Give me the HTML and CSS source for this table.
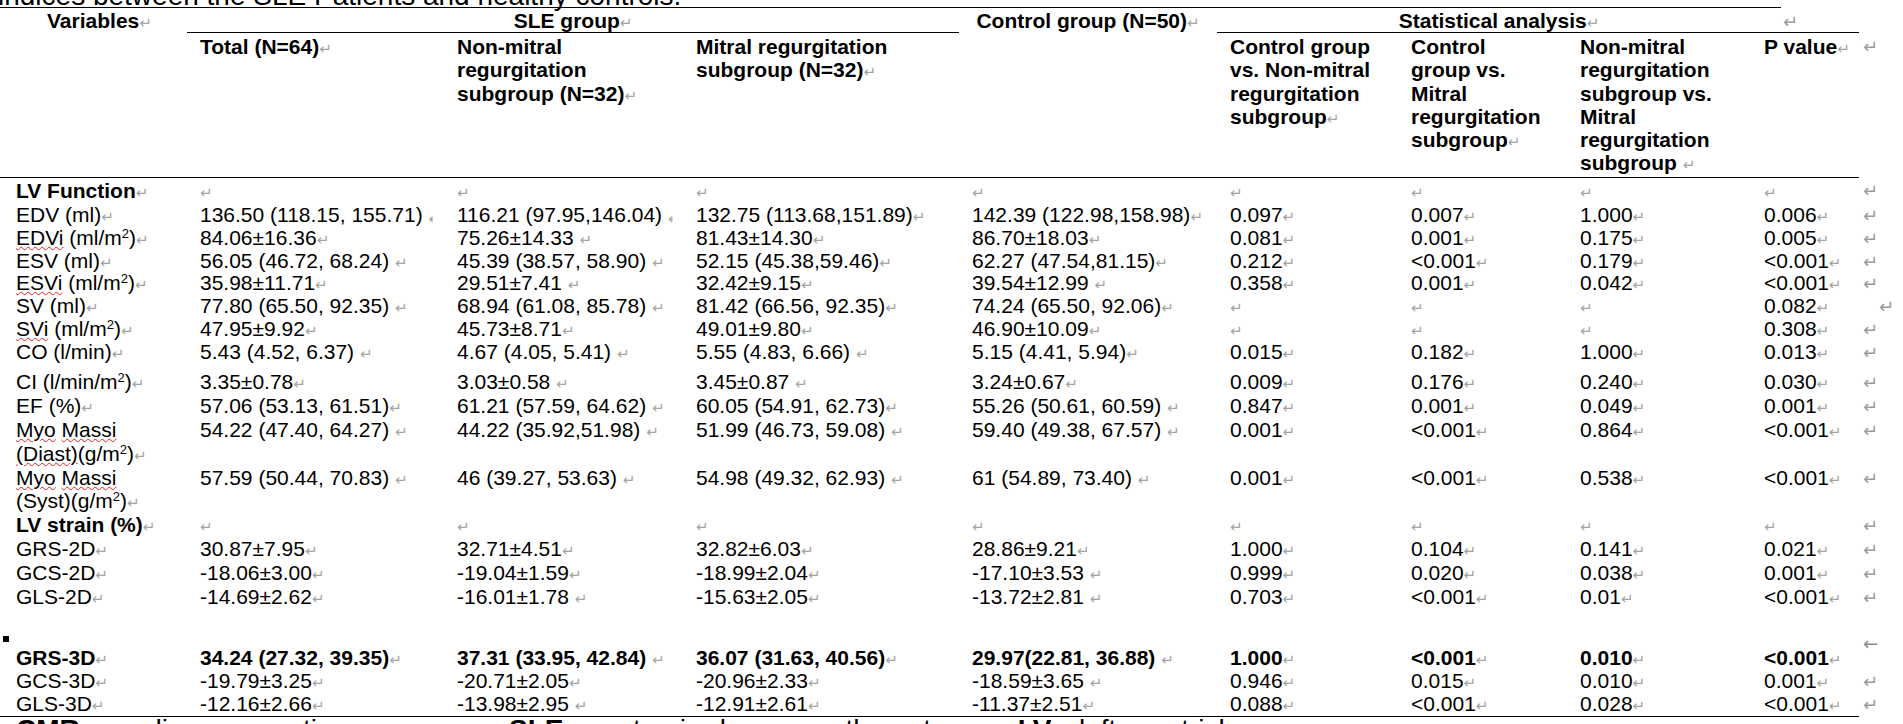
FILE: index.html
```html
<!DOCTYPE html>
<html>
<head>
<meta charset="utf-8">
<link rel="stylesheet" href="styles.css">
</head>
<body>
<p class="caption">indices between the SLE Patients and healthy controls.</p>
<table class="grid">
<colgroup>
<col class="w1"><col class="w2"><col class="w3"><col class="w4"><col class="w5"><col class="w6"><col class="w7"><col class="w8"><col class="w9a"><col class="w9b"><col class="wm">
</colgroup>
<tr class="h1">
<td class="bt hv" rowspan="2"><b>Variables</b><span class="m">↵</span></td>
<td class="bt hc" colspan="3"><b>SLE group</b><span class="m">↵</span></td>
<td class="bt hc" rowspan="2"><b>Control group (N=50)</b><span class="m">↵</span></td>
<td class="bt hc" colspan="4"><b>Statistical analysis</b><span class="m">↵</span></td>
<td class="h1end"><span class="rm">↵</span></td>
<td></td>
</tr>
<tr class="h2">
<td class="bt"><b>Total (N=64)</b><span class="m">↵</span></td>
<td class="bt"><b>Non-mitral<br>regurgitation<br>subgroup (N=32)</b><span class="m">↵</span></td>
<td class="bt"><b>Mitral regurgitation<br>subgroup (N=32)</b><span class="m">↵</span></td>
<td class="bt"><b>Control group<br>vs. Non-mitral<br>regurgitation<br>subgroup</b><span class="m">↵</span></td>
<td class="bt"><b>Control<br>group vs.<br>Mitral<br>regurgitation<br>subgroup</b><span class="m">↵</span></td>
<td class="bt"><b>Non-mitral<br>regurgitation<br>subgroup vs.<br>Mitral<br>regurgitation<br>subgroup </b><span class="m">↵</span></td>
<td class="bt" colspan="2"><b>P value</b><span class="m">↵</span></td>
<td class="rmc"><span class="rm">↵</span></td>
</tr>
<tr class="first">
<td class="bt lab"><b>LV Function</b><span class="m">↵</span></td>
<td class="bt"><span class="m">↵</span></td>
<td class="bt"><span class="m">↵</span></td>
<td class="bt"><span class="m">↵</span></td>
<td class="bt"><span class="m">↵</span></td>
<td class="bt"><span class="m">↵</span></td>
<td class="bt"><span class="m">↵</span></td>
<td class="bt"><span class="m">↵</span></td>
<td class="bt" colspan="2"><span class="m">↵</span></td>
<td class="rmc"><span class="rm">↵</span></td>
</tr>
<tr class="r1">
<td class="lab">EDV (ml)<span class="m">↵</span></td>
<td>136.50 (118.15, 155.71) <span class="cut"><span class="m">↵</span></span></td>
<td>116.21 (97.95,146.04) <span class="cut"><span class="m">↵</span></span></td>
<td>132.75 (113.68,151.89)<span class="m">↵</span></td>
<td>142.39 (122.98,158.98)<span class="m">↵</span></td>
<td>0.097<span class="m">↵</span></td>
<td>0.007<span class="m">↵</span></td>
<td>1.000<span class="m">↵</span></td>
<td colspan="2">0.006<span class="m">↵</span></td>
<td class="rmc"><span class="rm">↵</span></td>
</tr>
<tr class="r1">
<td class="lab"><span class="sp">EDVi</span> (ml/m<sup>2</sup>)<span class="m">↵</span></td>
<td>84.06±16.36<span class="m">↵</span></td>
<td>75.26±14.33 <span class="m">↵</span></td>
<td>81.43±14.30<span class="m">↵</span></td>
<td>86.70±18.03<span class="m">↵</span></td>
<td>0.081<span class="m">↵</span></td>
<td>0.001<span class="m">↵</span></td>
<td>0.175<span class="m">↵</span></td>
<td colspan="2">0.005<span class="m">↵</span></td>
<td class="rmc"><span class="rm">↵</span></td>
</tr>
<tr class="r1">
<td class="lab">ESV (ml)<span class="m">↵</span></td>
<td>56.05 (46.72, 68.24) <span class="m">↵</span></td>
<td>45.39 (38.57, 58.90) <span class="m">↵</span></td>
<td>52.15 (45.38,59.46)<span class="m">↵</span></td>
<td>62.27 (47.54,81.15)<span class="m">↵</span></td>
<td>0.212<span class="m">↵</span></td>
<td>&lt;0.001<span class="m">↵</span></td>
<td>0.179<span class="m">↵</span></td>
<td colspan="2">&lt;0.001<span class="m">↵</span></td>
<td class="rmc"><span class="rm">↵</span></td>
</tr>
<tr class="r1">
<td class="lab"><span class="sp">ESVi</span> (ml/m<sup>2</sup>)<span class="m">↵</span></td>
<td>35.98±11.71<span class="m">↵</span></td>
<td>29.51±7.41 <span class="m">↵</span></td>
<td>32.42±9.15<span class="m">↵</span></td>
<td>39.54±12.99 <span class="m">↵</span></td>
<td>0.358<span class="m">↵</span></td>
<td>0.001<span class="m">↵</span></td>
<td>0.042<span class="m">↵</span></td>
<td colspan="2">&lt;0.001<span class="m">↵</span></td>
<td class="rmc"><span class="rm">↵</span></td>
</tr>
<tr class="r1">
<td class="lab">SV (ml)<span class="m">↵</span></td>
<td>77.80 (65.50, 92.35) <span class="m">↵</span></td>
<td>68.94 (61.08, 85.78) <span class="m">↵</span></td>
<td>81.42 (66.56, 92.35)<span class="m">↵</span></td>
<td>74.24 (65.50, 92.06)<span class="m">↵</span></td>
<td><span class="m">↵</span></td>
<td><span class="m">↵</span></td>
<td><span class="m">↵</span></td>
<td colspan="2">0.082<span class="m">↵</span></td>
<td class="rmc far"><span class="rm">↵</span></td>
</tr>
<tr class="r1">
<td class="lab"><span class="sp">SVi</span> (ml/m<sup>2</sup>)<span class="m">↵</span></td>
<td>47.95±9.92<span class="m">↵</span></td>
<td>45.73±8.71<span class="m">↵</span></td>
<td>49.01±9.80<span class="m">↵</span></td>
<td>46.90±10.09<span class="m">↵</span></td>
<td><span class="m">↵</span></td>
<td><span class="m">↵</span></td>
<td><span class="m">↵</span></td>
<td colspan="2">0.308<span class="m">↵</span></td>
<td class="rmc"><span class="rm">↵</span></td>
</tr>
<tr class="r1 co">
<td class="lab">CO (l/min)<span class="m">↵</span></td>
<td>5.43 (4.52, 6.37) <span class="m">↵</span></td>
<td>4.67 (4.05, 5.41) <span class="m">↵</span></td>
<td>5.55 (4.83, 6.66) <span class="m">↵</span></td>
<td>5.15 (4.41, 5.94)<span class="m">↵</span></td>
<td>0.015<span class="m">↵</span></td>
<td>0.182<span class="m">↵</span></td>
<td>1.000<span class="m">↵</span></td>
<td colspan="2">0.013<span class="m">↵</span></td>
<td class="rmc"><span class="rm">↵</span></td>
</tr>
<tr class="r2">
<td class="lab">CI (l/min/m<sup>2</sup>)<span class="m">↵</span></td>
<td>3.35±0.78<span class="m">↵</span></td>
<td>3.03±0.58 <span class="m">↵</span></td>
<td>3.45±0.87 <span class="m">↵</span></td>
<td>3.24±0.67<span class="m">↵</span></td>
<td>0.009<span class="m">↵</span></td>
<td>0.176<span class="m">↵</span></td>
<td>0.240<span class="m">↵</span></td>
<td colspan="2">0.030<span class="m">↵</span></td>
<td class="rmc"><span class="rm">↵</span></td>
</tr>
<tr class="r2">
<td class="lab">EF (%)<span class="m">↵</span></td>
<td>57.06 (53.13, 61.51)<span class="m">↵</span></td>
<td>61.21 (57.59, 64.62) <span class="m">↵</span></td>
<td>60.05 (54.91, 62.73)<span class="m">↵</span></td>
<td>55.26 (50.61, 60.59) <span class="m">↵</span></td>
<td>0.847<span class="m">↵</span></td>
<td>0.001<span class="m">↵</span></td>
<td>0.049<span class="m">↵</span></td>
<td colspan="2">0.001<span class="m">↵</span></td>
<td class="rmc"><span class="rm">↵</span></td>
</tr>
<tr class="r2">
<td class="lab"><span class="sp">Myo</span> <span class="sp">Massi</span><br><span class="sp">(Diast)</span>(g/m<sup>2</sup>)<span class="m">↵</span></td>
<td>54.22 (47.40, 64.27) <span class="m">↵</span></td>
<td>44.22 (35.92,51.98) <span class="m">↵</span></td>
<td>51.99 (46.73, 59.08) <span class="m">↵</span></td>
<td>59.40 (49.38, 67.57) <span class="m">↵</span></td>
<td>0.001<span class="m">↵</span></td>
<td>&lt;0.001<span class="m">↵</span></td>
<td>0.864<span class="m">↵</span></td>
<td colspan="2">&lt;0.001<span class="m">↵</span></td>
<td class="rmc"><span class="rm">↵</span></td>
</tr>
<tr class="r2">
<td class="lab"><span class="sp">Myo</span> <span class="sp">Massi</span><br>(Syst)(g/m<sup>2</sup>)<span class="m">↵</span></td>
<td>57.59 (50.44, 70.83) <span class="m">↵</span></td>
<td>46 (39.27, 53.63) <span class="m">↵</span></td>
<td>54.98 (49.32, 62.93) <span class="m">↵</span></td>
<td>61 (54.89, 73.40) <span class="m">↵</span></td>
<td>0.001<span class="m">↵</span></td>
<td>&lt;0.001<span class="m">↵</span></td>
<td>0.538<span class="m">↵</span></td>
<td colspan="2">&lt;0.001<span class="m">↵</span></td>
<td class="rmc"><span class="rm">↵</span></td>
</tr>
<tr class="r2">
<td class="lab"><b>LV strain (%)</b><span class="m">↵</span></td>
<td><span class="m">↵</span></td>
<td><span class="m">↵</span></td>
<td><span class="m">↵</span></td>
<td><span class="m">↵</span></td>
<td><span class="m">↵</span></td>
<td><span class="m">↵</span></td>
<td><span class="m">↵</span></td>
<td colspan="2"><span class="m">↵</span></td>
<td class="rmc"><span class="rm">↵</span></td>
</tr>
<tr class="r2">
<td class="lab">GRS-2D<span class="m">↵</span></td>
<td>30.87±7.95<span class="m">↵</span></td>
<td>32.71±4.51<span class="m">↵</span></td>
<td>32.82±6.03<span class="m">↵</span></td>
<td>28.86±9.21<span class="m">↵</span></td>
<td>1.000<span class="m">↵</span></td>
<td>0.104<span class="m">↵</span></td>
<td>0.141<span class="m">↵</span></td>
<td colspan="2">0.021<span class="m">↵</span></td>
<td class="rmc"><span class="rm">↵</span></td>
</tr>
<tr class="r2">
<td class="lab">GCS-2D<span class="m">↵</span></td>
<td>-18.06±3.00<span class="m">↵</span></td>
<td>-19.04±1.59<span class="m">↵</span></td>
<td>-18.99±2.04<span class="m">↵</span></td>
<td>-17.10±3.53 <span class="m">↵</span></td>
<td>0.999<span class="m">↵</span></td>
<td>0.020<span class="m">↵</span></td>
<td>0.038<span class="m">↵</span></td>
<td colspan="2">0.001<span class="m">↵</span></td>
<td class="rmc"><span class="rm">↵</span></td>
</tr>
<tr class="r2">
<td class="lab">GLS-2D<span class="m">↵</span></td>
<td>-14.69±2.62<span class="m">↵</span></td>
<td>-16.01±1.78 <span class="m">↵</span></td>
<td>-15.63±2.05<span class="m">↵</span></td>
<td>-13.72±2.81 <span class="m">↵</span></td>
<td>0.703<span class="m">↵</span></td>
<td>&lt;0.001<span class="m">↵</span></td>
<td>0.01<span class="m">↵</span></td>
<td colspan="2">&lt;0.001<span class="m">↵</span></td>
<td class="rmc"><span class="rm">↵</span></td>
</tr>
<tr class="gap">
<td class="lab gaplab"><span class="keep"></span><b>GRS-3D</b><span class="m">↵</span></td>
<td><b>34.24 (27.32, 39.35)</b><span class="m">↵</span></td>
<td><b>37.31 (33.95, 42.84)</b> <span class="m">↵</span></td>
<td><b>36.07 (31.63, 40.56)</b><span class="m">↵</span></td>
<td><b>29.97(22.81, 36.88)</b> <span class="m">↵</span></td>
<td><b>1.000</b><span class="m">↵</span></td>
<td><b>&lt;0.001</b><span class="m">↵</span></td>
<td><b>0.010</b><span class="m">↵</span></td>
<td colspan="2"><b>&lt;0.001</b><span class="m">↵</span></td>
<td class="rmc gapmark"><span class="larr">←</span></td>
</tr>
<tr>
<td class="lab">GCS-3D<span class="m">↵</span></td>
<td>-19.79±3.25<span class="m">↵</span></td>
<td>-20.71±2.05<span class="m">↵</span></td>
<td>-20.96±2.33<span class="m">↵</span></td>
<td>-18.59±3.65 <span class="m">↵</span></td>
<td>0.946<span class="m">↵</span></td>
<td>0.015<span class="m">↵</span></td>
<td>0.010<span class="m">↵</span></td>
<td colspan="2">0.001<span class="m">↵</span></td>
<td class="rmc"><span class="rm">↵</span></td>
</tr>
<tr class="last">
<td class="lab bb">GLS-3D<span class="m">↵</span></td>
<td class="bb">-12.16±2.66<span class="m">↵</span></td>
<td class="bb">-13.98±2.95 <span class="m">↵</span></td>
<td class="bb">-12.91±2.61<span class="m">↵</span></td>
<td class="bb">-11.37±2.51<span class="m">↵</span></td>
<td class="bb">0.088<span class="m">↵</span></td>
<td class="bb">&lt;0.001<span class="m">↵</span></td>
<td class="bb">0.028<span class="m">↵</span></td>
<td class="bb" colspan="2">&lt;0.001<span class="m">↵</span></td>
<td class="rmc"><span class="rm">↵</span></td>
</tr>
</table>
<p class="note"><b>CMR</b>, cardiac magnetic resonance; <b>SLE</b>, systemic lupus erythematosus; <b>LV</b>, left ventricle.</p>
</body>
</html>
```
FILE: styles.css
```css
* { box-sizing: border-box; }

html, body {
  margin: 0;
  padding: 0;
  background: #ffffff;
}

body {
  width: 1903px;
  height: 724px;
  overflow: hidden;
  font-family: "Liberation Sans", Arial, sans-serif;
  color: #000;
}

.caption {
  font-size: 28px;
  line-height: 30px;
  margin: -19px 0 -4px -2px;
  white-space: nowrap;
}

.grid {
  border-collapse: separate;
  border-spacing: 0;
  table-layout: fixed;
  width: 1903px;
  font-size: 21px;
  line-height: 23.3px;
}

.w1 { width: 187px; }
.w2 { width: 257px; }
.w3 { width: 239px; }
.w4 { width: 276px; }
.w5 { width: 258px; }
.w6 { width: 181px; }
.w7 { width: 169px; }
.w8 { width: 184px; }
.w9a { width: 30px; }
.w9b { width: 78px; }
.wm { width: 44px; }

.grid td {
  padding: 0 0 0 13px;
  vertical-align: top;
  white-space: nowrap;
}

.grid td.lab { padding-left: 16px; }

.bt { border-top: 1px solid #000; }
.bb { border-bottom: 1px solid #000; }

.h1 td { padding-top: 0.5px; }
.h1 td.hv { padding-left: 47px; }
.h1 td.hc { text-align: center; padding-left: 0; }
.h1 td.h1end { padding-left: 2px; padding-top: 4px; line-height: 20px; }

.h2 td { padding-top: 2.2px; padding-bottom: 1.9px; }

.first td { padding-top: 1.3px; padding-bottom: 2.05px; }

.r1 { line-height: 22.7px; }
.r2 { line-height: 23.9px; }

.co td { padding-bottom: 6.7px; }

.gap td { padding-top: 36.7px; }
.gap td.gaplab { padding-top: 27.5px; }
.gap td.gapmark { padding-top: 22px; }

.keep {
  display: block;
  width: 6px;
  height: 6px;
  background: #000;
  margin-left: -13px;
  margin-bottom: 3.2px;
}

.grid td.rmc { padding-left: 4px; }
.grid td.rmc.far { padding-left: 20px; }

.m {
  font-family: "DejaVu Sans", sans-serif;
  font-size: 15px;
  line-height: 1;
  font-weight: normal;
  color: #a3a3a3;
}

.rm {
  font-family: "DejaVu Sans", sans-serif;
  font-size: 18px;
  line-height: 1;
  color: #9a9a9a;
}

.larr {
  font-family: "DejaVu Sans", sans-serif;
  font-size: 18px;
  line-height: 17px;
  color: #8a8a8a;
}

.cut {
  display: inline-block;
  width: 5px;
  height: 14px;
  line-height: 14px;
  overflow: hidden;
  vertical-align: -2px;
}

.sp {
  text-decoration: underline wavy #e02020;
  text-decoration-thickness: 1px;
  text-underline-offset: 1px;
}

sup {
  font-size: 0.62em;
  line-height: 0;
  vertical-align: 0.55em;
}

.note {
  margin: 0;
  padding-left: 16px;
  font-size: 28px;
  line-height: 26px;
  word-spacing: 12px;
  white-space: nowrap;
}
```
